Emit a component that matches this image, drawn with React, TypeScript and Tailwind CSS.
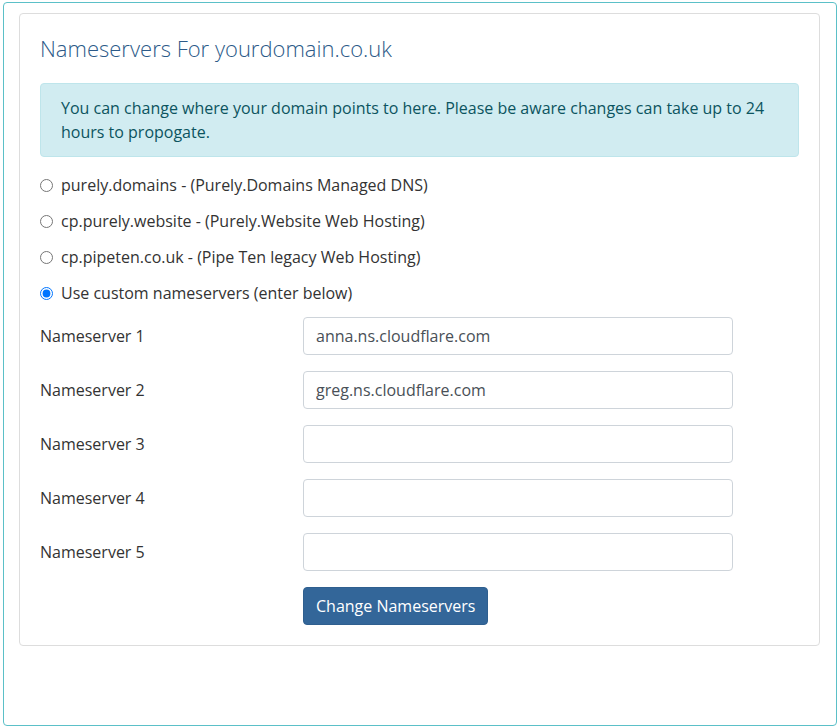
import { useState } from "react";

const options = [
  { id: "purely", label: "purely.domains - (Purely.Domains Managed DNS)" },
  { id: "website", label: "cp.purely.website - (Purely.Website Web Hosting)" },
  { id: "pipeten", label: "cp.pipeten.co.uk - (Pipe Ten legacy Web Hosting)" },
  { id: "custom", label: "Use custom nameservers (enter below)" },
];

const initial = ["anna.ns.cloudflare.com", "greg.ns.cloudflare.com", "", "", ""];

export default function App() {
  const [choice, setChoice] = useState("custom");
  const [servers, setServers] = useState(initial);

  return (
    <div className="w-[840px] h-[727px] bg-white pt-[2px] pl-[3px]" style={{ fontFamily: '"Open Sans", "Liberation Sans", sans-serif' }}>
      <div className="w-[834px] h-[724px] border border-[#5bc0c8] rounded-[4px] pt-[10px] pl-[15px]">
        <div className="w-[801px] h-[633px] border border-[#dddddd] rounded-[4px] px-5 pt-5 text-[#333333]">
          <h2 className="text-[22px] leading-[29px] font-light text-[#2c5a88]">Nameservers For yourdomain.co.uk</h2>

          <div className="mt-5 bg-[#d1ecf1] border border-[#bee5eb] rounded-[4px] px-5 py-3 text-[16px] leading-6 text-[#0c5460]">
            You can change where your domain points to here. Please be aware changes can take up to 24 hours to propogate.
          </div>

          <div className="mt-4 flex flex-col gap-3">
            {options.map((o) => (
              <label key={o.id} className="flex items-center gap-2 text-[16px] leading-6 text-[#333333]">
                <input
                  type="radio"
                  name="ns"
                  checked={choice === o.id}
                  onChange={() => setChoice(o.id)}
                  className="w-[13px] h-[13px] m-0 accent-[#0075ff]"
                />
                <span>{o.label}</span>
              </label>
            ))}
          </div>

          <div className="mt-3 flex flex-col gap-4">
            {servers.map((v, i) => (
              <div key={i} className="flex items-center">
                <div className="w-[263px] text-[16px] leading-6 text-[#333333]">Nameserver {i + 1}</div>
                <input
                  type="text"
                  value={v}
                  onChange={(e) => {
                    const next = [...servers];
                    next[i] = e.target.value;
                    setServers(next);
                  }}
                  className="w-[430px] h-[38px] border border-[#ced4da] rounded-[4px] px-3 text-[16px] text-[#495057] outline-none"
                />
              </div>
            ))}
            <div className="flex">
              <div className="w-[263px]" />
              <button className="h-[38px] px-3 bg-[#336699] text-white text-[16px] rounded-[4px] border border-[#2f5f8f]">
                Change Nameservers
              </button>
            </div>
          </div>
        </div>
      </div>
    </div>
  );
}
